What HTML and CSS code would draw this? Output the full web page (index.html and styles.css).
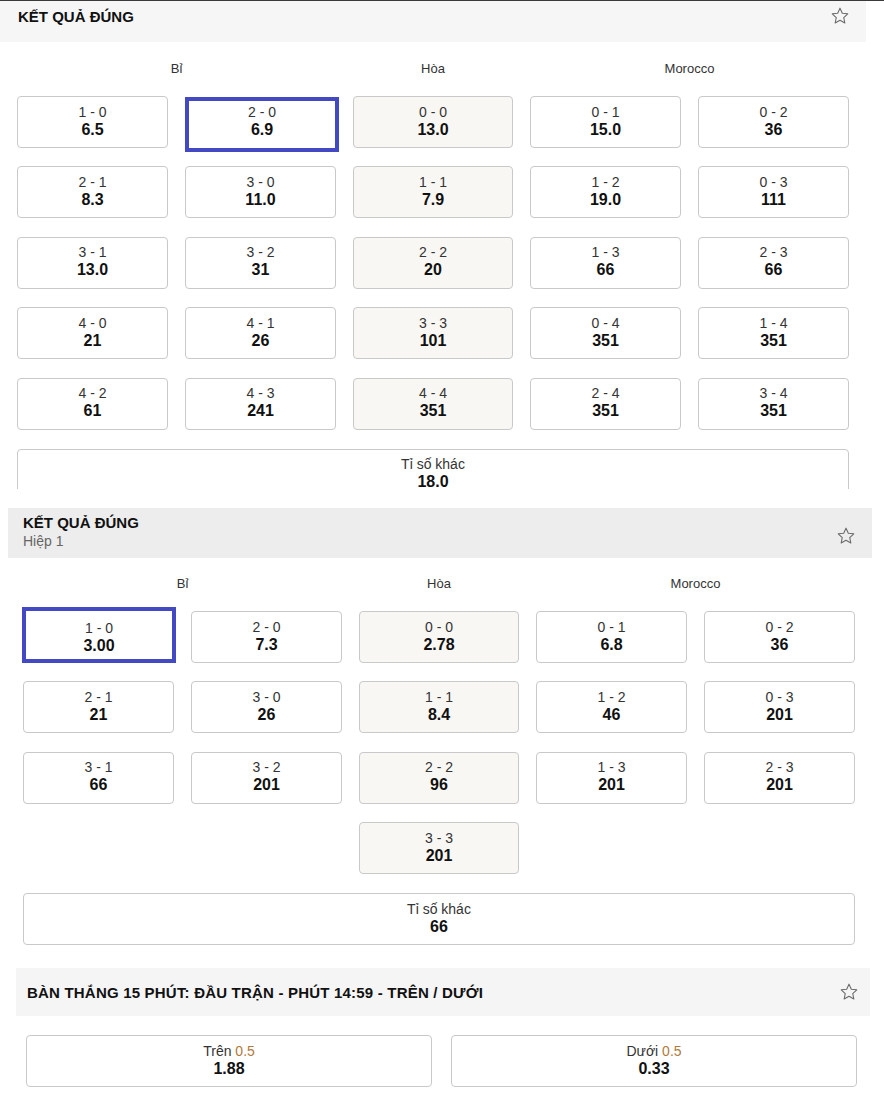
FILE: index.html
```html
<!DOCTYPE html>
<html lang="vi">
<head>
<meta charset="utf-8">
<title>Kết quả đúng</title>
<link rel="stylesheet" href="styles.css">
</head>
<body>
<div class="topline"></div>

<section class="sec sec1">
  <div class="head head1">
    <div class="titles"><div class="title">KẾT QUẢ ĐÚNG</div></div>
    <svg class="star" viewBox="0 0 24 24"><path d="M12 2.6l2.8 6 6.5.8-4.8 4.5 1.3 6.5L12 17.2l-5.8 3.2 1.3-6.5-4.8-4.5 6.5-.8z"/></svg>
  </div>
  <div class="body body1">
    <div class="grid labels">
      <div class="lab home">Bỉ</div>
      <div class="lab draw">Hòa</div>
      <div class="lab away">Morocco</div>
    </div>
    <div class="grid cards">
      <div class="card"><span class="sc">1 - 0</span><b>6.5</b></div>
      <div class="card sel sel1"><span class="sc">2 - 0</span><b>6.9</b></div>
      <div class="card d"><span class="sc">0 - 0</span><b>13.0</b></div>
      <div class="card"><span class="sc">0 - 1</span><b>15.0</b></div>
      <div class="card"><span class="sc">0 - 2</span><b>36</b></div>

      <div class="card"><span class="sc">2 - 1</span><b>8.3</b></div>
      <div class="card"><span class="sc">3 - 0</span><b>11.0</b></div>
      <div class="card d"><span class="sc">1 - 1</span><b>7.9</b></div>
      <div class="card"><span class="sc">1 - 2</span><b>19.0</b></div>
      <div class="card"><span class="sc">0 - 3</span><b>111</b></div>

      <div class="card"><span class="sc">3 - 1</span><b>13.0</b></div>
      <div class="card"><span class="sc">3 - 2</span><b>31</b></div>
      <div class="card d"><span class="sc">2 - 2</span><b>20</b></div>
      <div class="card"><span class="sc">1 - 3</span><b>66</b></div>
      <div class="card"><span class="sc">2 - 3</span><b>66</b></div>

      <div class="card"><span class="sc">4 - 0</span><b>21</b></div>
      <div class="card"><span class="sc">4 - 1</span><b>26</b></div>
      <div class="card d"><span class="sc">3 - 3</span><b>101</b></div>
      <div class="card"><span class="sc">0 - 4</span><b>351</b></div>
      <div class="card"><span class="sc">1 - 4</span><b>351</b></div>

      <div class="card"><span class="sc">4 - 2</span><b>61</b></div>
      <div class="card"><span class="sc">4 - 3</span><b>241</b></div>
      <div class="card d"><span class="sc">4 - 4</span><b>351</b></div>
      <div class="card"><span class="sc">2 - 4</span><b>351</b></div>
      <div class="card"><span class="sc">3 - 4</span><b>351</b></div>

      <div class="card other"><span class="sc">Tỉ số khác</span><b>18.0</b></div>
    </div>
  </div>
</section>

<section class="sec sec2">
  <div class="head head2">
    <div class="titles">
      <div class="title">KẾT QUẢ ĐÚNG</div>
      <div class="sub">Hiệp 1</div>
    </div>
    <svg class="star" viewBox="0 0 24 24"><path d="M12 2.6l2.8 6 6.5.8-4.8 4.5 1.3 6.5L12 17.2l-5.8 3.2 1.3-6.5-4.8-4.5 6.5-.8z"/></svg>
  </div>
  <div class="body body2">
    <div class="grid labels">
      <div class="lab home">Bỉ</div>
      <div class="lab draw">Hòa</div>
      <div class="lab away">Morocco</div>
    </div>
    <div class="grid cards">
      <div class="card sel sel2"><span class="sc">1 - 0</span><b>3.00</b></div>
      <div class="card"><span class="sc">2 - 0</span><b>7.3</b></div>
      <div class="card d"><span class="sc">0 - 0</span><b>2.78</b></div>
      <div class="card"><span class="sc">0 - 1</span><b>6.8</b></div>
      <div class="card"><span class="sc">0 - 2</span><b>36</b></div>

      <div class="card"><span class="sc">2 - 1</span><b>21</b></div>
      <div class="card"><span class="sc">3 - 0</span><b>26</b></div>
      <div class="card d"><span class="sc">1 - 1</span><b>8.4</b></div>
      <div class="card"><span class="sc">1 - 2</span><b>46</b></div>
      <div class="card"><span class="sc">0 - 3</span><b>201</b></div>

      <div class="card"><span class="sc">3 - 1</span><b>66</b></div>
      <div class="card"><span class="sc">3 - 2</span><b>201</b></div>
      <div class="card d"><span class="sc">2 - 2</span><b>96</b></div>
      <div class="card"><span class="sc">1 - 3</span><b>201</b></div>
      <div class="card"><span class="sc">2 - 3</span><b>201</b></div>

      <div class="card d col3"><span class="sc">3 - 3</span><b>201</b></div>

      <div class="card other"><span class="sc">Tỉ số khác</span><b>66</b></div>
    </div>
  </div>
</section>

<section class="sec sec3">
  <div class="head head3">
    <div class="titles"><div class="title">BÀN THẮNG 15 PHÚT: ĐẦU TRẬN - PHÚT 14:59 - TRÊN / DƯỚI</div></div>
    <svg class="star" viewBox="0 0 24 24"><path d="M12 2.6l2.8 6 6.5.8-4.8 4.5 1.3 6.5L12 17.2l-5.8 3.2 1.3-6.5-4.8-4.5 6.5-.8z"/></svg>
  </div>
  <div class="ou">
    <div class="card"><span class="sc">Trên <i class="ln">0.5</i></span><b>1.88</b></div>
    <div class="card"><span class="sc">Dưới <i class="ln">0.5</i></span><b>0.33</b></div>
  </div>
</section>
</body>
</html>
```

FILE: styles.css
```css
* { box-sizing: border-box; }

html, body {
  margin: 0;
  padding: 0;
  background: #ffffff;
}

body {
  width: 884px;
  font-family: "Liberation Sans", Arial, sans-serif;
  color: #222;
}

.topline {
  height: 1px;
  background: #3a3a3a;
}

/* ---------- section headers ---------- */
.head {
  display: flex;
  justify-content: space-between;
  align-items: flex-start;
}

.title {
  font-size: 15px;
  font-weight: bold;
  line-height: 17px;
  color: #111;
}

.sub {
  font-size: 14px;
  line-height: 18px;
  color: #666;
}

.star {
  width: 20px;
  height: 20px;
  flex: none;
}

.star path {
  fill: none;
  stroke: #6a6a6a;
  stroke-width: 1.3;
  stroke-linejoin: round;
}

.head1 {
  width: 866px;
  height: 41px;
  background: #f6f6f6;
  padding: 7px 16px 0 18px;
}

.head1 .star { margin-top: -2px; }

.head2 {
  width: 864px;
  height: 50px;
  margin-left: 8px;
  background: #ededed;
  padding: 6px 16px 0 15px;
  align-items: center;
}

.head2 .titles { align-self: flex-start; }
.head2 .sub { margin-top: 1px; }

.head3 {
  width: 854px;
  height: 48px;
  margin-left: 16px;
  background: #f5f5f5;
  padding: 0 11px 0 11px;
  align-items: center;
}

.head3 .title {
  font-size: 15px;
  letter-spacing: 0.2px;
}

/* ---------- section 1 clip ---------- */
.sec1 {
  height: 488px;
  overflow: hidden;
}

.sec2 { margin-top: 19px; }
.sec3 { margin-top: 23px; }

.body1 {
  padding: 19px 0 0 17px;
}

.body2 {
  padding: 18px 0 0 23px;
}

/* ---------- grids ---------- */
.grid {
  display: grid;
  grid-template-columns: 151px 151px 160px 151px 151px;
  column-gap: 17px;
  width: 832px;
}

.labels {
  margin-bottom: 19px;
}

.lab {
  font-size: 13px;
  line-height: 16px;
  color: #333;
  text-align: center;
}

.lab.home { grid-column: 1 / 3; }
.lab.draw { grid-column: 3 / 4; }
.lab.away { grid-column: 4 / 6; }

.cards {
  row-gap: 18.4px;
}

/* ---------- cards ---------- */
.card {
  height: 52px;
  border: 1px solid #c9c9c9;
  border-radius: 4px;
  background: #ffffff;
  display: flex;
  flex-direction: column;
  align-items: center;
  justify-content: center;
  padding-bottom: 2px;
}

.card.d { background: #f9f7f3; }

.card .sc {
  font-size: 14px;
  line-height: 16px;
  color: #333;
}

.card b {
  font-size: 16px;
  line-height: 18px;
  margin-top: 1px;
  font-weight: bold;
  color: #111;
}

.card.other {
  grid-column: 1 / 6;
  margin-top: 0.6px;
}

.card.col3 { grid-column: 3 / 4; }

.card.sel {
  border: 4px solid #4349c3;
  border-radius: 0;
  width: 154px;
}

.card.sel1 {
  height: 55px;
  margin: 1px -3px -4px 0;
  padding-bottom: 6px;
}

.card.sel2 {
  height: 56px;
  margin: -4px -2px 0 -1px;
  padding-top: 4px;
  padding-bottom: 0;
}

/* ---------- over / under ---------- */
.ou {
  display: grid;
  grid-template-columns: 406px 406px;
  column-gap: 19px;
  margin: 19px 0 0 26px;
}

.ou .card { height: 52px; }

.ln {
  font-style: normal;
  color: #b07a3c;
}
```
